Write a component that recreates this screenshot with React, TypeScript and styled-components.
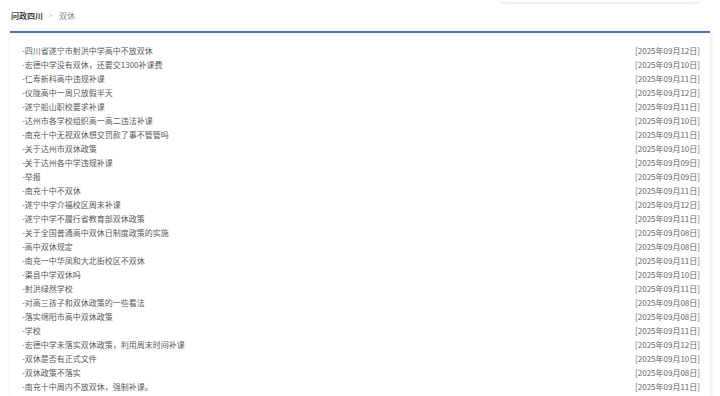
import React from "react";
import styled, { createGlobalStyle } from "styled-components";

const Global = createGlobalStyle`
  html, body { margin: 0; padding: 0; background: #ffffff; }
  body { font-family: "Noto Sans CJK SC", "Noto Sans", sans-serif; }
  * { box-sizing: border-box; }
`;

const Page = styled.div`
  position: relative;
  width: 720px;
  height: 396px;
  overflow: hidden;
  padding: 0 10px 0 10px;
  display: flex;
  flex-direction: column;
`;

const TopDrop = styled.div`
  position: absolute;
  left: 500px;
  top: -20px;
  width: 200px;
  height: 22px;
  background: #fff;
  border-radius: 3px;
  box-shadow: 0 1px 3px rgba(0, 0, 0, 0.12);
`;

const Crumbs = styled.div`
  height: 31px;
  display: flex;
  align-items: center;
  gap: 6px;
  padding-left: 1px;
  padding-bottom: 1px;
  font-size: 8px;
`;

const CrumbStrong = styled.span`
  font-weight: bold;
  color: #444;
`;

const CrumbSep = styled.span`
  color: #c8c8c8;
  font-size: 7px;
`;

const CrumbCurrent = styled.span`
  color: #888;
`;

const Panel = styled.div`
  flex: 1;
  background: #fff;
  border-top: 2px solid #4a77b4;
  box-shadow: 1px 1px 4px rgba(0, 0, 0, 0.1);
  padding: 11px 10px 0 12px;
`;

const List = styled.ul`
  list-style: none;
  margin: 0;
  padding: 0;
`;

const Row = styled.li`
  display: flex;
  justify-content: space-between;
  align-items: center;
  height: 14px;
  font-size: 8px;
  line-height: 14px;
`;

const Title = styled.span`
  color: #5a5a5a;
`;

const DateText = styled.span`
  color: #666;
`;

const items: [string, string][] = [
  ["四川省遂宁市射洪中学高中不放双休", "12"],
  ["宏德中学没有双休，还要交1300补课费", "10"],
  ["仁寿新科高中违规补课", "11"],
  ["仪陇高中一周只放假半天", "12"],
  ["遂宁船山职校要求补课", "11"],
  ["达州市各学校组织高一高二违法补课", "10"],
  ["南充十中无视双休想交罚款了事不管管吗", "11"],
  ["关于达州市双休政策", "10"],
  ["关于达州各中学违规补课", "09"],
  ["举报", "09"],
  ["南充十中不双休", "11"],
  ["遂宁中学介福校区周末补课", "12"],
  ["遂宁中学不履行省教育部双休政策", "11"],
  ["关于全国普通高中双休日制度政策的实施", "08"],
  ["高中双休规定", "08"],
  ["南充一中华凤和大北街校区不双休", "11"],
  ["渠县中学双休吗", "10"],
  ["射洪绿然学校", "11"],
  ["对高三孩子和双休政策的一些看法", "08"],
  ["落实绵阳市高中双休政策", "08"],
  ["学校", "11"],
  ["宏德中学未落实双休政策，利用周末时间补课", "12"],
  ["双休是否有正式文件", "10"],
  ["双休政策不落实", "08"],
  ["南充十中周内不放双休，强制补课。", "11"],
];

export default function App() {
  return (
    <>
      <Global />
      <Page>
        <TopDrop />
        <Crumbs>
          <CrumbStrong>问政四川</CrumbStrong>
          <CrumbSep>&gt;</CrumbSep>
          <CrumbCurrent>双休</CrumbCurrent>
        </Crumbs>
        <Panel>
          <List>
            {items.map(([t, d], i) => (
              <Row key={i}>
                <Title>-{t}</Title>
                <DateText>[2025年09月{d}日]</DateText>
              </Row>
            ))}
          </List>
        </Panel>
      </Page>
    </>
  );
}
